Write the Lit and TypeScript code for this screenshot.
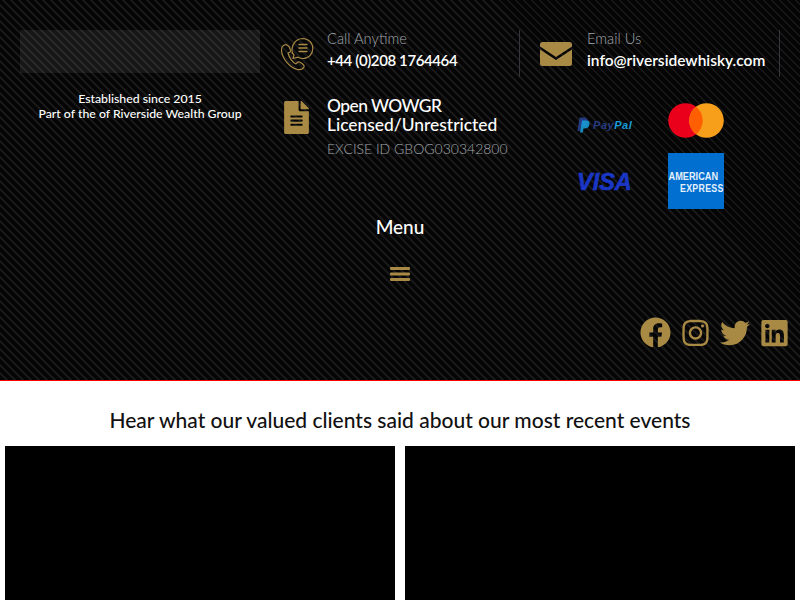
import { LitElement, html, css } from "lit";
import { customElement } from "lit/decorators.js";

const GOLD = "#a98a45";

@customElement("app-root")
export class AppRoot extends LitElement {
  static styles = css`
    :host { display: block; width: 800px; height: 600px; overflow: hidden; background: #fff; font-family: Lato, "Liberation Sans", sans-serif; }
    .dark {
      box-sizing: border-box; border-bottom: 1px solid #f00; height: 381px;
      background-color: #050505;
      background-image: repeating-linear-gradient(45deg, #050505 0, #050505 3.9px, #181818 3.9px, #181818 5.66px);
      display: flex; flex-direction: column;
    }
    .top { display: grid; grid-template-columns: 260px 250px 260px; padding: 30px 0 0 10px; height: 210px; box-sizing: border-box; }
    .brand { padding: 0 10px; text-align: center; color: #fff; font-size: 12.3px; line-height: 15px; font-weight: 500; white-space: nowrap; }
    .logo { height: 43px; background: rgba(255,255,255,.07); margin-bottom: 18px; }
    .col { display: flex; flex-direction: column; }
    .contact { display: flex; height: 47px; border-right: 1px solid #33363b; box-sizing: border-box; }
    .ic { width: 57px; flex: none; display: flex; padding-left: 10px; box-sizing: border-box; align-items: center; }
    .second .ic { width: 67px; padding-left: 20px; }
    .label { color: #a0a5ab; font-size: 14.7px; line-height: 18px; margin-bottom: 4px; margin-top: -1px; font-weight: 300; }
    .val { color: #fff; font-size: 15px; line-height: 20px; font-weight: 600; white-space: nowrap; }
    .tel { letter-spacing: -0.4px; margin-top: -1px; }
    .mailto { font-size: 15.5px; margin-top: -1px; }
    .lic { display: flex; margin-top: 19px; }
    .lic .ic { height: 36px; margin-top: 5px; padding-left: 14px; align-items: flex-start; }
    .h { color: #fff; font-size: 17.4px; line-height: 19px; font-weight: 500; white-space: nowrap; }
    .l1 { letter-spacing: -0.55px; }
    .excise { color: #a0a5ab; font-size: 14px; line-height: 18px; margin-top: 6px; white-space: nowrap; font-weight: 300; }
    .cards { display: grid; grid-template-columns: 91px 56px; grid-template-rows: 36px 56px; row-gap: 14px; margin: 26px 0 0 57px; align-items: center; }
    .pp { padding-top: 8px; }
    .cards svg { display: block; }
    .menu { text-align: center; color: #fff; font-size: 19px; line-height: 24px; font-weight: 500; margin-top: 5px; }
    .burger { display: flex; justify-content: center; margin-top: 28px; }
    .burger svg { display: block; }
    .social { display: flex; justify-content: flex-end; align-items: center; gap: 11px; padding-right: 12px; margin-top: 36px; }
    .light { background: #fff; }
    h2 { margin: 0; text-align: center; font-weight: 500; font-size: 21px; line-height: 26px; color: #111; padding-top: 26px; height: 37px; }
    .videos { display: grid; grid-template-columns: 390px 390px; gap: 10px; padding: 0 5px; margin-top: 2px; }
    .video { height: 160px; background: #000; }
  `;

  phone() {
    return html`<svg width="34" height="34" viewBox="0 0 34 34" fill="none" stroke="${GOLD}" stroke-width="1.2" stroke-linecap="round" stroke-linejoin="round">
      <path d="M9 9.500 L6 7.500 C3 8 1.200 10.500 1.500 14 C2.500 22 10 31 17.500 32.500 C20.500 33 23 32 24 30 C24.500 28.500 23.500 27.500 22 26.500 L19.500 25 C18 24.500 17 25.500 16 27 C12.500 25.500 9 20.500 8 16 C10 15.500 11 14.500 10.500 13 Z"/>
      <path d="M12.200 16.500 C11 8 15.500 1.800 22.500 1.500 C28.500 1.500 32.800 6 32.800 11.500 C32.800 17 28.500 21.500 23 21.500 C21 21.500 19.500 21 18 20.200 L13 21.500 L14 18 C13 17 12.600 16.500 12.200 15"/>
      <path d="M19 7.500 H27 M19 11 H27 M19 14.500 H27" stroke-width="1.400"/>
    </svg>`;
  }
  mail() {
    return html`<svg width="32" height="24" viewBox="0 0 32 24"><path fill="${GOLD}" d="M2.500 0 H29.500 A2.500 2.500 0 0 1 32 2.500 V4.500 L16 15 L0 4.500 V2.500 A2.500 2.500 0 0 1 2.500 0 Z M0 7.500 L16 18 L32 7.500 V21.500 A2.500 2.500 0 0 1 29.500 24 H2.500 A2.500 2.500 0 0 1 0 21.500 Z"/></svg>`;
  }
  doc() {
    return html`<svg width="25" height="33" viewBox="0 0 384 512"><path fill="${GOLD}" d="M224 136V0H24C10.700 0 0 10.700 0 24v464c0 13.300 10.700 24 24 24h336c13.300 0 24-10.700 24-24V160H248c-13.200 0-24-10.800-24-24zm64 236c0 6.600-5.400 12-12 12H108c-6.600 0-12-5.400-12-12v-8c0-6.600 5.400-12 12-12h168c6.600 0 12 5.400 12 12v8zm0-64c0 6.600-5.400 12-12 12H108c-6.600 0-12-5.400-12-12v-8c0-6.600 5.400-12 12-12h168c6.600 0 12 5.400 12 12v8zm0-72v8c0 6.600-5.400 12-12 12H108c-6.600 0-12-5.400-12-12v-8c0-6.600 5.400-12 12-12h168c6.600 0 12 5.400 12 12zm96-114.100v6.100H256V0h6.100c6.400 0 12.500 2.500 17 7l97.900 98c4.500 4.500 7 10.600 7 16.900z"/></svg>`;
  }
  paypal() {
    return html`<svg width="56" height="16" viewBox="0 0 56 16">
      <path fill="#253b80" d="M2.500 0.500 H7 C10 0.500 11 2.500 10.400 5 C9.800 8 7.500 9.500 5 9.500 H4 L3 14 H0.500 Z"/>
      <path fill="#179bd7" d="M5 3.500 H9 C12 3.500 13 5 12.500 7.500 C11.800 10.500 10 11.500 7.500 11.500 H6.500 L5.700 15.500 H3 Z" opacity=".9"/>
      <text x="16" y="12" font-family="'Liberation Sans',sans-serif" font-size="11" letter-spacing=".55" font-weight="700" font-style="italic"><tspan fill="#253b80">Pay</tspan><tspan fill="#179bd7">Pal</tspan></text>
    </svg>`;
  }
  master() {
    return html`<svg width="56" height="36" viewBox="0 0 56 36">
      <circle cx="17.500" cy="17.500" r="17.300" fill="#eb001b"/><circle cx="38.500" cy="17.500" r="17.300" fill="#f79e1b"/>
      <path fill="#ff5f00" d="M28 3.800 A17.300 17.300 0 0 1 28 31.200 A17.300 17.300 0 0 1 28 3.800 Z"/>
    </svg>`;
  }
  visa() {
    return html`<svg width="56" height="28" viewBox="0 0 56 28">
      <text transform="translate(0 23) scale(1 1.05)" font-family="'Liberation Sans',sans-serif" font-size="23.500" font-weight="700" font-style="italic" fill="#1a36c4" stroke="#1a36c4" stroke-width=".6">VISA</text>
    </svg>`;
  }
  amex() {
    return html`<svg width="56" height="56" viewBox="0 0 56 56">
      <rect width="56" height="56" fill="#016fd0"/>
      <g font-family="'Liberation Sans',sans-serif" font-weight="700" fill="#e4f0fb">
        <text transform="translate(0.500 27) scale(1 1.2)" font-size="9.200">AMERICAN</text>
        <text transform="translate(12 38.500) scale(1 1.15)" font-size="8.800" letter-spacing=".3">EXPRESS</text>
      </g>
    </svg>`;
  }
  fb() {
    return html`<svg width="31" height="31" viewBox="0 0 512 512"><path fill="${GOLD}" d="M504 256C504 119 393 8 256 8S8 119 8 256c0 123.780 90.690 226.380 209.250 245V327.690h-63V256h63v-54.640c0-62.150 37-96.480 93.670-96.480 27.140 0 55.520 4.840 55.520 4.840v61h-31.280c-30.800 0-40.410 19.120-40.410 38.730V256h68.780l-11 71.690h-57.780V501C413.310 482.380 504 379.780 504 256z"/></svg>`;
  }
  ig() {
    return html`<svg width="27" height="30" viewBox="0 0 448 512"><path fill="${GOLD}" d="M224.100 141c-63.600 0-114.900 51.300-114.900 114.900s51.300 114.900 114.900 114.900S339 319.500 339 255.900 287.700 141 224.100 141zm0 189.600c-41.100 0-74.700-33.500-74.700-74.700s33.500-74.700 74.700-74.700 74.700 33.500 74.700 74.700-33.600 74.700-74.700 74.700zm146.400-194.300c0 14.900-12 26.800-26.800 26.800-14.900 0-26.800-12-26.800-26.800s12-26.800 26.800-26.800 26.800 12 26.800 26.800zm76.100 27.200c-1.700-35.900-9.900-67.700-36.200-93.900-26.200-26.200-58-34.400-93.900-36.200-37-2.100-147.900-2.100-184.900 0-35.800 1.700-67.600 9.900-93.900 36.100s-34.400 58-36.200 93.900c-2.100 37-2.100 147.900 0 184.900 1.700 35.900 9.900 67.700 36.200 93.900s58 34.400 93.900 36.200c37 2.100 147.900 2.100 184.900 0 35.900-1.700 67.700-9.900 93.900-36.200 26.200-26.200 34.400-58 36.200-93.900 2.100-37 2.100-147.800 0-184.800zM398.800 388c-7.800 19.600-22.900 34.700-42.600 42.600-29.500 11.700-99.500 9-132.100 9s-102.700 2.600-132.100-9c-19.600-7.800-34.700-22.900-42.600-42.600-11.700-29.500-9-99.500-9-132.100s-2.600-102.700 9-132.100c7.800-19.600 22.900-34.700 42.600-42.600 29.500-11.700 99.500-9 132.100-9s102.700-2.600 132.100 9c19.600 7.800 34.700 22.900 42.600 42.600 11.700 29.500 9 99.500 9 132.100s2.700 102.700-9 132.100z"/></svg>`;
  }
  tw() {
    return html`<svg width="30" height="30" viewBox="0 0 512 512"><path fill="${GOLD}" d="M459.370 151.716c.325 4.548.325 9.097.325 13.645 0 138.720-105.583 298.558-298.558 298.558-59.452 0-114.680-17.219-161.137-47.106 8.447.974 16.568 1.299 25.340 1.299 49.055 0 94.213-16.568 130.274-44.832-46.132-.975-84.792-31.188-98.112-72.772 6.498.974 12.995 1.624 19.818 1.624 9.421 0 18.843-1.300 27.614-3.573-48.081-9.747-84.143-51.980-84.143-102.985v-1.299c13.969 7.797 30.214 12.670 47.431 13.319-28.264-18.843-46.781-51.005-46.781-87.391 0-19.492 5.197-37.360 14.294-52.954 51.655 63.675 129.300 105.258 216.365 109.807-1.624-7.797-2.599-15.918-2.599-24.040 0-57.828 46.782-104.934 104.934-104.934 30.213 0 57.502 12.670 76.670 33.137 23.715-4.548 46.456-13.320 66.599-25.340-7.798 24.366-24.366 44.833-46.132 57.827 21.117-2.273 41.584-8.122 60.426-16.243-14.292 20.791-32.161 39.308-52.628 54.253z"/></svg>`;
  }
  li() {
    return html`<svg width="27" height="30" viewBox="0 0 448 512"><path fill="${GOLD}" d="M416 32H31.900C14.300 32 0 46.500 0 64.300v383.400C0 465.500 14.300 480 31.900 480H416c17.600 0 32-14.500 32-32.300V64.300c0-17.800-14.400-32.300-32-32.300zM135.400 416H69V202.200h66.500V416zm-33.200-243c-21.300 0-38.500-17.300-38.500-38.500S80.900 96 102.200 96c21.200 0 38.500 17.300 38.500 38.500 0 21.300-17.200 38.500-38.500 38.500zm282.100 243h-66.400V312c0-24.800-.5-56.700-34.500-56.700-34.600 0-39.900 27-39.900 54.900V416h-66.400V202.200h63.700v29.200h.9c8.900-16.800 30.600-34.500 62.900-34.500 67.200 0 79.700 44.300 79.700 101.900V416z"/></svg>`;
  }

  render() {
    return html`
      <div class="dark">
        <div class="top">
          <div class="brand">
            <div class="logo"></div>
            <div>Established since 2015</div>
            <div>Part of the of Riverside Wealth Group</div>
          </div>
          <div class="col">
            <div class="contact">
              <div class="ic">${this.phone()}</div>
              <div>
                <div class="label">Call Anytime</div>
                <div class="val tel">+44 (0)208 1764464</div>
              </div>
            </div>
            <div class="lic">
              <div class="ic">${this.doc()}</div>
              <div>
                <div class="h"><span class="l1">Open WOWGR</span><br />Licensed/Unrestricted</div>
                <div class="excise">EXCISE ID GBOG030342800</div>
              </div>
            </div>
          </div>
          <div class="col">
            <div class="contact second">
              <div class="ic">${this.mail()}</div>
              <div>
                <div class="label">Email Us</div>
                <div class="val mailto">info@riversidewhisky.com</div>
              </div>
            </div>
            <div class="cards">
              <div class="pp">${this.paypal()}</div>
              <div>${this.master()}</div>
              <div>${this.visa()}</div>
              <div>${this.amex()}</div>
            </div>
          </div>
        </div>
        <div class="menu">Menu</div>
        <div class="burger">
          <svg width="20" height="14" viewBox="0 0 20 14"><path fill="${GOLD}" d="M1 0h18a1 1 0 0 1 1 1v1a1 1 0 0 1-1 1H1a1 1 0 0 1-1-1V1a1 1 0 0 1 1-1zM1 5.500h18a1 1 0 0 1 1 1v1a1 1 0 0 1-1 1H1a1 1 0 0 1-1-1v-1a1 1 0 0 1 1-1zM1 11h18a1 1 0 0 1 1 1v1a1 1 0 0 1-1 1H1a1 1 0 0 1-1-1v-1a1 1 0 0 1 1-1z"/></svg>
        </div>
        <div class="social">${this.fb()}${this.ig()}${this.tw()}${this.li()}</div>
      </div>
      <div class="light">
        <h2>Hear what our valued clients said about our most recent events</h2>
        <div class="videos"><div class="video"></div><div class="video"></div></div>
      </div>
    `;
  }
}
